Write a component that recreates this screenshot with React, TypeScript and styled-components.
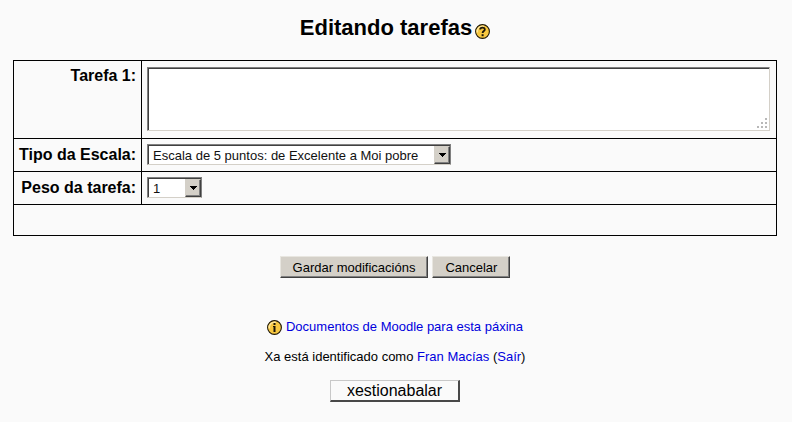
import React from "react";
import styled, { createGlobalStyle } from "styled-components";

const GlobalStyle = createGlobalStyle`
  body {
    margin: 0;
    background: #fafafa;
    color: #000;
    font-family: "Liberation Sans", Arial, sans-serif;
    font-size: 13px;
    line-height: 16px;
  }
  *, *::before, *::after { box-sizing: border-box; }
`;

const Page = styled.main`
  padding: 16px 15px 20px 13px;
`;

const Heading = styled.h1`
  display: flex;
  justify-content: center;
  align-items: flex-end;
  gap: 3px;
  margin: 0 0 20px;
  font-size: 22px;
  line-height: 24px;
`;

const HelpButton = styled.button`
  display: flex;
  padding: 0 0 1px;
  border: 0;
  background: none;
  cursor: pointer;
`;

const FormTable = styled.table`
  width: 100%;
  border-collapse: collapse;
  border: 1px solid #000;
`;

const LabelCell = styled.th<{ $top?: boolean }>`
  width: 128px;
  padding: 6px 5px;
  border: 1px solid #000;
  font-size: 16px;
  line-height: 18px;
  text-align: right;
  vertical-align: ${(p) => (p.$top ? "top" : "middle")};
  white-space: nowrap;
`;

const FieldCell = styled.td<{ $tall?: boolean }>`
  padding: ${(p) => (p.$tall ? "6px 6px 7px 5px" : "5px 6px 6px 5px")};
  border: 1px solid #000;
`;

const EmptyCell = styled.td`
  height: 31px;
  padding: 0;
  border: 1px solid #000;
`;

const Sunken = styled.div`
  position: relative;
  display: flex;
  background: #fff;
  border: 1px solid;
  border-color: #808080 #d4d0c8 #d4d0c8 #808080;
  box-shadow: inset 1px 1px 0 #404040;
`;

const TextArea = styled.textarea`
  display: block;
  width: 100%;
  height: 62px;
  padding: 3px;
  border: 0;
  outline: 0;
  background: transparent;
  resize: none;
  font: 13px/16px "Liberation Sans", Arial, sans-serif;
`;

const Grip = styled.svg`
  position: absolute;
  right: 2px;
  bottom: 2px;
  pointer-events: none;
`;

const SelectBox = styled(Sunken)<{ $wide?: boolean }>`
  width: ${(p) => (p.$wide ? 304 : 55)}px;
  border-right-color: #808080;
`;

const Select = styled.select`
  appearance: none;
  width: 100%;
  height: 19px;
  padding: 2px 18px 0 5px;
  border: 0;
  outline: 0;
  border-radius: 0;
  background: transparent;
  color: #111;
  font: 13px/16px "Liberation Sans", Arial, sans-serif;
`;

const DropArrow = styled.span`
  position: absolute;
  top: 1px;
  right: 0;
  bottom: 0;
  width: 16px;
  display: flex;
  align-items: center;
  justify-content: center;
  background: #d4d0c8;
  border: 1px solid;
  border-color: #d4d0c8 #404040 #404040 #d4d0c8;
  box-shadow: inset -1px -1px 0 #808080;
  pointer-events: none;
`;

const Actions = styled.div`
  display: flex;
  justify-content: center;
  gap: 4px;
  margin-top: 20px;
`;

const ActionButton = styled.button`
  height: 22px;
  padding: 1px 12px 0;
  border: 1px solid;
  border-color: #e8e6e0 #404040 #404040 #e8e6e0;
  border-radius: 0;
  background: #d4d0c8;
  box-shadow: inset -1px -1px 0 #808080;
  color: #000;
  font: 13px/16px "Liberation Sans", Arial, sans-serif;
`;

const Footer = styled.footer`
  display: flex;
  flex-direction: column;
  align-items: center;
  margin-top: 41px;
`;

const Link = styled.a`
  color: #0000dd;
  text-decoration: none;
`;

const DocsLink = styled(Link)`
  display: flex;
  gap: 4px;
`;

const DocsIcon = styled.span`
  display: flex;
  padding-top: 1px;
`;

const Login = styled.p`
  margin: 14px 0 15px;
`;

const CourseButton = styled.button`
  height: 22px;
  padding: 0 16px;
  border: solid;
  border-width: 1px 2px 2px 1px;
  border-color: #c8c8c8 #484848 #484848 #c8c8c8;
  border-radius: 0;
  background: #fafafa;
  color: #000;
  font: 16px/18px "Liberation Sans", Arial, sans-serif;
`;

function Coin({ children }: { children: React.ReactNode }) {
  return (
    <svg width="15" height="15" viewBox="0 0 15 15" aria-hidden="true">
      <circle cx="7.5" cy="7.5" r="6.9" fill="#f8c840" stroke="#1c1608" strokeWidth="1.1" />
      <path d="M2.3 8.5A5.3 5.3 0 0 1 9 2.4" fill="none" stroke="#ffe79a" strokeWidth="1.5" />
      {children}
    </svg>
  );
}

function Dropdown({ id, wide, options }: { id: string; wide?: boolean; options: string[] }) {
  return (
    <SelectBox $wide={wide}>
      <Select id={id}>
        {options.map((o) => (
          <option key={o}>{o}</option>
        ))}
      </Select>
      <DropArrow>
        <svg width="7" height="4" viewBox="0 0 7 4" shapeRendering="crispEdges" aria-hidden="true">
          <path d="M0 0h7v1H6v1H5v1H4v1H3V3H2V2H1V1H0z" />
        </svg>
      </DropArrow>
    </SelectBox>
  );
}

export default function App() {
  return (
    <>
      <GlobalStyle />
      <Page>
        <Heading>
          Editando tarefas
          <HelpButton type="button" aria-label="Axuda">
            <Coin>
              <path
                d="M5.2 5.5C5.2 2.9 9.8 2.9 9.8 5.4C9.8 7 7.6 7 7.6 9"
                fill="none"
                stroke="#1c1608"
                strokeWidth="1.8"
              />
              <path d="M6.6 10.2h2v2h-2z" fill="#1c1608" />
            </Coin>
          </HelpButton>
        </Heading>
        <form onSubmit={(e) => e.preventDefault()}>
          <FormTable>
            <tbody>
              <tr>
                <LabelCell scope="row" $top>
                  <label htmlFor="task">Tarefa 1:</label>
                </LabelCell>
                <FieldCell $tall>
                  <Sunken>
                    <TextArea id="task" />
                    <Grip width="10" height="10" viewBox="0 0 10 10" fill="#b8b8b8" shapeRendering="crispEdges">
                      <path d="M8 0h2v2H8zM4 4h2v2H4zM8 4h2v2H8zM0 8h2v2H0zM4 8h2v2H4zM8 8h2v2H8z" />
                    </Grip>
                  </Sunken>
                </FieldCell>
              </tr>
              <tr>
                <LabelCell scope="row">
                  <label htmlFor="scale">Tipo da Escala:</label>
                </LabelCell>
                <FieldCell>
                  <Dropdown id="scale" wide options={["Escala de 5 puntos: de Excelente a Moi pobre"]} />
                </FieldCell>
              </tr>
              <tr>
                <LabelCell scope="row">
                  <label htmlFor="weight">Peso da tarefa:</label>
                </LabelCell>
                <FieldCell>
                  <Dropdown id="weight" options={["1", "2", "3", "4"]} />
                </FieldCell>
              </tr>
              <tr>
                <EmptyCell colSpan={2} />
              </tr>
            </tbody>
          </FormTable>
          <Actions>
            <ActionButton type="submit">Gardar modificacións</ActionButton>
            <ActionButton type="button">Cancelar</ActionButton>
          </Actions>
        </form>
        <Footer>
          <DocsLink href="#docs">
            <DocsIcon>
              <Coin>
                <path d="M6.5 3h2v2h-2zM6 6h2.5v6h-2V7H6z" fill="#1c1608" />
              </Coin>
            </DocsIcon>
            Documentos de Moodle para esta páxina
          </DocsLink>
          <Login>
            Xa está identificado como <Link href="#user">Fran Macías</Link> (<Link href="#logout">Saír</Link>)
          </Login>
          <CourseButton type="button">xestionabalar</CourseButton>
        </Footer>
      </Page>
    </>
  );
}
